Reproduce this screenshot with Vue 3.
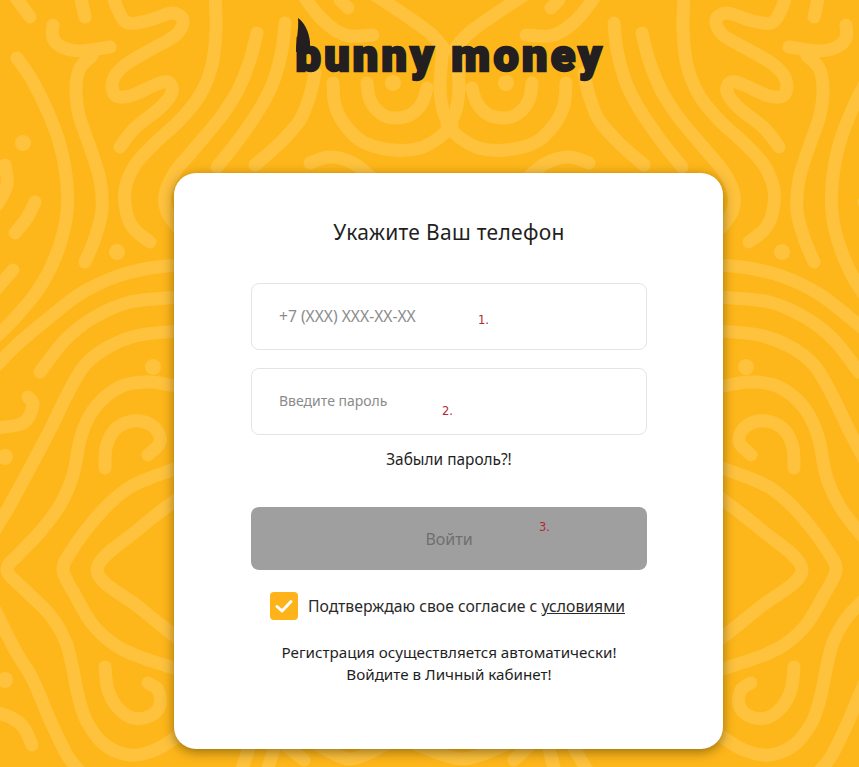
<template>
  <div class="page">
    <svg class="pattern" viewBox="0 0 859 767" width="859" height="767" aria-hidden="true">
      <g class="lines">
        <path v-for="(d, i) in leftPaths" :key="'l' + i" :d="d" />
        <path v-for="(d, i) in leftPaths" :key="'r' + i" :d="d" transform="translate(899 0) scale(-1 1)" />
        <path v-for="(d, i) in bottomPaths" :key="'b' + i" :d="d" />
      </g>
      <g class="dots">
        <circle v-for="(c, i) in dots" :key="'dl' + i" :cx="c[0]" :cy="c[1]" r="8" />
        <circle v-for="(c, i) in dots" :key="'dr' + i" :cx="899 - c[0]" :cy="c[1]" r="8" />
      </g>
    </svg>

    <div class="content">
      <div class="logo">
        <svg class="ear" viewBox="0 0 16 34" width="16" height="34" aria-hidden="true">
          <path d="M2 0 C8 4 13 13 14 24 L14 34 L0 34 C0 22 3 12 2 0 Z" />
        </svg>
        <span class="logo-text">bunny money</span>
      </div>

      <div class="card">
        <h2 class="title">Укажите Ваш телефон</h2>

        <div class="field">
          <input class="phone" type="text" placeholder="+7 (XXX) XXX-XX-XX" />
          <span class="mark mark-1">1.</span>
        </div>
        <div class="field second">
          <input class="password" type="password" placeholder="Введите пароль" />
          <span class="mark mark-2">2.</span>
        </div>

        <a class="forgot">Забыли пароль?!</a>

        <div class="submit-wrap">
          <button class="submit" type="button">Войти</button>
          <span class="mark mark-3">3.</span>
        </div>

        <label class="agree">
          <span class="check">
            <svg viewBox="0 0 20 20" width="20" height="20" aria-hidden="true">
              <path d="M3 10.5 L8 15 L17 5.5" />
            </svg>
          </span>
          <span>Подтверждаю свое согласие с <u>условиями</u></span>
        </label>

        <p class="note">Регистрация осуществляется автоматически!<br />Войдите в Личный кабинет!</p>
      </div>
    </div>
  </div>
</template>

<script setup>
// Catmull-Rom through the traced points, gives the smooth background lines
function smooth(pts) {
  let d = `M${pts[0][0]} ${pts[0][1]}`
  for (let i = 0; i < pts.length - 1; i++) {
    const p0 = pts[i - 1] || pts[i]
    const p1 = pts[i]
    const p2 = pts[i + 1]
    const p3 = pts[i + 2] || p2
    const c1x = p1[0] + (p2[0] - p0[0]) / 6
    const c1y = p1[1] + (p2[1] - p0[1]) / 6
    const c2x = p2[0] - (p3[0] - p1[0]) / 6
    const c2y = p2[1] - (p3[1] - p1[1]) / 6
    d += ` C${c1x.toFixed(1)} ${c1y.toFixed(1)} ${c2x.toFixed(1)} ${c2y.toFixed(1)} ${p2[0]} ${p2[1]}`
  }
  return d
}

// left half only, the pattern is mirrored around x = 449.5
const leftLines = [
  [[17, 58], [32, 80], [47, 110], [60, 145], [67, 185], [66, 220], [55, 258], [38, 290], [15, 318], [-5, 338]],
  [[53, 25], [53, 38], [62, 47], [80, 51], [110, 47]],
  [[92, 56], [80, 68], [76, 88], [79, 115], [90, 147], [100, 180], [102, 210], [95, 238], [85, 262]],
  [[113, -5], [118, 10], [128, 23], [150, 20], [172, 13], [183, 20], [176, 35], [150, 50], [125, 65], [113, 80], [115, 95], [130, 96], [155, 85], [168, 82], [172, 92], [160, 108], [135, 128], [120, 147]],
  [[215, -5], [216, 30], [212, 65], [200, 95], [180, 120], [155, 143], [135, 165], [125, 190], [127, 215], [135, 230], [150, 242]],
  [[257, 33], [250, 60], [238, 90], [220, 118], [195, 148], [175, 172], [165, 195], [167, 212], [178, 228]],
  [[285, 23], [282, 50], [274, 80], [262, 105], [240, 138], [217, 167]],
  [[315, 73], [310, 95], [300, 120], [280, 143], [255, 165]],
  [[35, 202], [27, 218], [15, 233]],
  [[5, 165], [7, 185], [-3, 205]],
  [[13, 270], [-5, 290]],
  [[85, 17], [80, -5]],
  [[30, 17], [14, -5]],
  [[-5, 367], [20, 342], [50, 317], [80, 294], [115, 277], [150, 268], [180, 265]],
  [[40, 372], [65, 340], [93, 318], [130, 302], [180, 297]],
  [[180, 331], [140, 335], [110, 346], [85, 365], [67, 395], [50, 430], [30, 468], [10, 505], [-5, 530]],
  [[180, 387], [150, 382], [125, 385], [105, 397], [90, 415], [80, 440], [73, 475], [60, 505], [40, 532], [20, 553], [7, 570], [25, 590], [50, 615], [65, 640], [72, 665], [78, 695], [87, 722], [105, 745], [130, 755], [155, 750], [180, 735]],
  [[28, 397], [33, 405], [23, 423], [-5, 428]],
  [[105, 468], [106, 448], [113, 432], [125, 423], [140, 421], [155, 428], [160, 442], [148, 455]],
  [[105, 667], [108, 690], [118, 708], [133, 718], [150, 716], [160, 705], [158, 690], [148, 683]],
  [[180, 467], [155, 476], [130, 487], [110, 503], [90, 525], [72, 550], [63, 570], [75, 595], [93, 625], [115, 645], [140, 657], [180, 670]],
  [[180, 497], [140, 528], [97, 570], [140, 608], [180, 640]],
  [[-5, 610], [15, 650], [33, 680], [50, 720], [67, 755], [83, 775]],
  [[-5, 712], [12, 718], [24, 728], [32, 745]],
  [[303, -5], [318, 15], [335, 30], [350, 36], [373, 35]],
  [[375, -5], [405, 15], [430, 33], [445, 50]],
  [[340, 0], [348, 8]],
  [[333, 83], [335, 105], [345, 125], [363, 142], [393, 150], [420, 148], [440, 137], [452, 125]],
  [[367, 83], [370, 100], [380, 113], [393, 118], [410, 115], [422, 103], [427, 88]],
  [[443, 48], [440, 85], [443, 110], [452, 130]],
  [[310, 163], [330, 157], [353, 163], [372, 178]]
]

// strip under the card, not mirrored
const bottomLines = [
  [[250, 745], [240, 775]],
  [[275, 745], [266, 775]],
  [[285, 745], [304, 760]],
  [[318, 745], [350, 759], [385, 745]],
  [[417, 745], [463, 759], [505, 745]],
  [[530, 745], [514, 760]],
  [[548, 745], [556, 775]],
  [[572, 745], [590, 775]]
]

const leftPaths = leftLines.map(smooth)
const bottomPaths = bottomLines.map(smooth)
const dots = [[23, 143], [117, 252], [153, 367], [5, 457], [5, 680], [393, 83]]
</script>

<style>
html, body {
  margin: 0;
  background: #feb71a;
}
</style>

<style scoped>
.page {
  position: relative;
  width: 859px;
  height: 767px;
  overflow: hidden;
  background: #feb71a;
  font-family: "Noto Sans", "Open Sans", sans-serif;
  color: #1f1f1f;
}

.pattern {
  position: absolute;
  left: 0;
  top: 0;
}

.lines path {
  fill: none;
  stroke: #fec23c;
  stroke-width: 13;
  stroke-linecap: round;
  stroke-linejoin: round;
}

.dots circle {
  fill: #fec23c;
}

.content {
  position: relative;
  display: flex;
  flex-direction: column;
  align-items: center;
  padding: 18px 0 0 38px;
}

.logo {
  position: relative;
  height: 155px;
  width: 306px;
}

.logo-text {
  position: absolute;
  left: 0;
  top: 8px;
  font-family: "Roboto", sans-serif;
  font-weight: 900;
  font-size: 45px;
  line-height: 60px;
  letter-spacing: 3.3px;
  white-space: nowrap;
  color: #231f20;
  -webkit-text-stroke: 2.4px #231f20;
}

.ear {
  position: absolute;
  left: 0;
  top: 0;
  fill: #231f20;
}

.card {
  width: 549px;
  height: 576px;
  box-sizing: border-box;
  padding: 45px 76px 0 77px;
  background: #fff;
  border-radius: 22px;
  box-shadow: 0 3px 12px rgba(50, 35, 0, 0.5);
  display: flex;
  flex-direction: column;
  align-items: center;
}

.title {
  margin: 0 0 37px;
  font-size: 21px;
  line-height: 28px;
  letter-spacing: 0.3px;
  font-weight: 400;
  color: #1f1f1f;
}

.field {
  position: relative;
  width: 100%;
}

.second {
  margin-top: 18px;
}

.field input {
  display: block;
  width: 100%;
  height: 67px;
  box-sizing: border-box;
  padding: 0 27px 2px;
  border: 1px solid #e4e4e4;
  border-radius: 8px;
  outline: none;
  font-family: inherit;
  color: #777;
}

.phone {
  font-size: 15.6px;
}

.password {
  font-size: 14px;
}

.field input::placeholder {
  color: #8b8b8b;
  opacity: 1;
}

.mark {
  position: absolute;
  font-family: "DejaVu Sans", sans-serif;
  font-size: 11.5px;
  line-height: 14px;
  color: #b3282d;
}

.mark-1 {
  left: 227px;
  top: 30px;
}

.mark-2 {
  left: 191px;
  top: 36px;
}

.mark-3 {
  left: 288px;
  top: 13px;
}

.forgot {
  margin-top: 14px;
  font-size: 15.4px;
  line-height: 21px;
  color: #1f1f1f;
}

.submit-wrap {
  position: relative;
  width: 100%;
  margin-top: 37px;
}

.submit {
  display: block;
  width: 100%;
  height: 63px;
  border: none;
  border-radius: 8px;
  background: #a09fa0;
  color: #6f6f6f;
  font-family: inherit;
  font-size: 16px;
}

.agree {
  display: flex;
  align-items: center;
  gap: 10px;
  margin-top: 22px;
  margin-left: -3px;
  font-size: 15.75px;
  line-height: 28px;
  color: #2a2a2a;
}

.check {
  width: 28px;
  height: 28px;
  border-radius: 4px;
  background: #feb31a;
  display: flex;
  align-items: center;
  justify-content: center;
}

.check path {
  fill: none;
  stroke: #fff;
  stroke-width: 3;
  stroke-linecap: round;
  stroke-linejoin: round;
}

.note {
  margin: 21px 0 0;
  text-align: center;
  font-size: 15.2px;
  line-height: 22px;
  color: #1f1f1f;
}
</style>
